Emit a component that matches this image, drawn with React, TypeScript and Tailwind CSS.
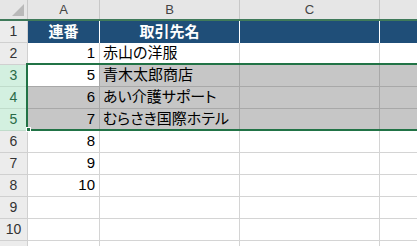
import React from "react";

const FONT = { fontFamily: '"Liberation Sans", "Noto Sans CJK JP", sans-serif' };

type Row = { n: number; label?: string; a?: string; b?: string; header?: boolean; sel?: boolean; active?: boolean };

const rows: Row[] = [
  { n: 1, label: "1", a: "連番", b: "取引先名", header: true },
  { n: 2, label: "2", a: "1", b: "赤山の洋服" },
  { n: 3, label: "3", a: "5", b: "青木太郎商店", sel: true, active: true },
  { n: 4, label: "4", a: "6", b: "あい介護サポート", sel: true },
  { n: 5, label: "5", a: "7", b: "むらさき国際ホテル", sel: true },
  { n: 6, label: "6", a: "8" },
  { n: 7, label: "7", a: "9" },
  { n: 8, label: "8", a: "10" },
  { n: 9, label: "9" },
  { n: 10, label: "10" },
  { n: 11 },
];

function DataRow({ r }: { r: Row }) {
  if (r.header) {
    return (
      <div className="flex h-[22px] shrink-0">
        <div className="w-[28px] shrink-0 bg-[#ececec] border-r border-b border-[#d0d0d0] flex items-center justify-center text-[14px] text-[#333]">
          {r.label}
        </div>
        <div className="w-[72px] shrink-0 bg-[#1f4e78] border-r border-white flex items-center justify-center text-white font-bold text-[15px]">
          {r.a}
        </div>
        <div className="w-[140px] shrink-0 bg-[#1f4e78] border-r border-white flex items-center justify-center text-white font-bold text-[15px]">
          {r.b}
        </div>
        <div className="w-[140px] shrink-0 bg-[#1f4e78] border-r border-white" />
        <div className="flex-1 bg-[#1f4e78]" />
      </div>
    );
  }
  const fill = r.sel ? "bg-[#c6c6c6]" : "bg-white";
  const line = r.sel ? "border-[#a8a8a8]" : "border-[#d4d4d4]";
  return (
    <div className="flex h-[22px] shrink-0">
      <div
        className={
          r.sel
            ? "w-[28px] shrink-0 bg-[#d3f0e0] border-r border-b border-[#c0dccb] flex items-center justify-center text-[14px] text-[#2a6b47]"
            : "w-[28px] shrink-0 bg-[#ececec] border-r border-b border-[#d0d0d0] flex items-center justify-center text-[14px] text-[#333]"
        }
      >
        {r.label}
      </div>
      <div
        className={`w-[72px] shrink-0 ${r.active ? "bg-white" : fill} border-r border-b ${line} flex items-center justify-end pr-[4px] text-[15px] text-black`}
      >
        {r.a}
      </div>
      <div className={`w-[140px] shrink-0 ${fill} border-r border-b ${line} flex items-center pl-[3px] text-[15px] text-black whitespace-nowrap [font-feature-settings:"palt"]`}>
        {r.b}
      </div>
      <div className={`w-[140px] shrink-0 ${fill} border-r border-b ${line}`} />
      <div className={`flex-1 ${fill} border-b ${line}`} />
    </div>
  );
}

export default function App() {
  return (
    <div className="relative w-[417px] h-[246px] overflow-hidden bg-white flex flex-col" style={FONT}>
      {/* column headers */}
      <div className="flex h-[21px] shrink-0 bg-[#e6e6e6] border-b-2 border-[#3f7a5a]">
        <div className="w-[28px] shrink-0 border-r border-[#c8c8c8] relative">
          <svg className="absolute right-[3px] bottom-[3px]" width="12" height="12" viewBox="0 0 12 12">
            <polygon points="12,0 12,12 0,12" fill="#b9b9b9" />
          </svg>
        </div>
        <div className="w-[72px] shrink-0 border-r border-[#c8c8c8] flex items-center justify-center text-[13px] text-[#444]">A</div>
        <div className="w-[140px] shrink-0 border-r border-[#c8c8c8] flex items-center justify-center text-[13px] text-[#444]">B</div>
        <div className="w-[140px] shrink-0 border-r border-[#c8c8c8] flex items-center justify-center text-[13px] text-[#444]">C</div>
        <div className="flex-1" />
      </div>
      {rows.map((r) => (
        <DataRow key={r.n} r={r} />
      ))}
      {/* selection border overlay */}
      <div className="absolute left-[26px] top-[63px] right-[-4px] h-[68px] border-2 border-[#217346] pointer-events-none" />
      <div className="absolute left-[26px] top-[127px] w-[5px] h-[5px] bg-[#217346] border border-white" />
    </div>
  );
}
